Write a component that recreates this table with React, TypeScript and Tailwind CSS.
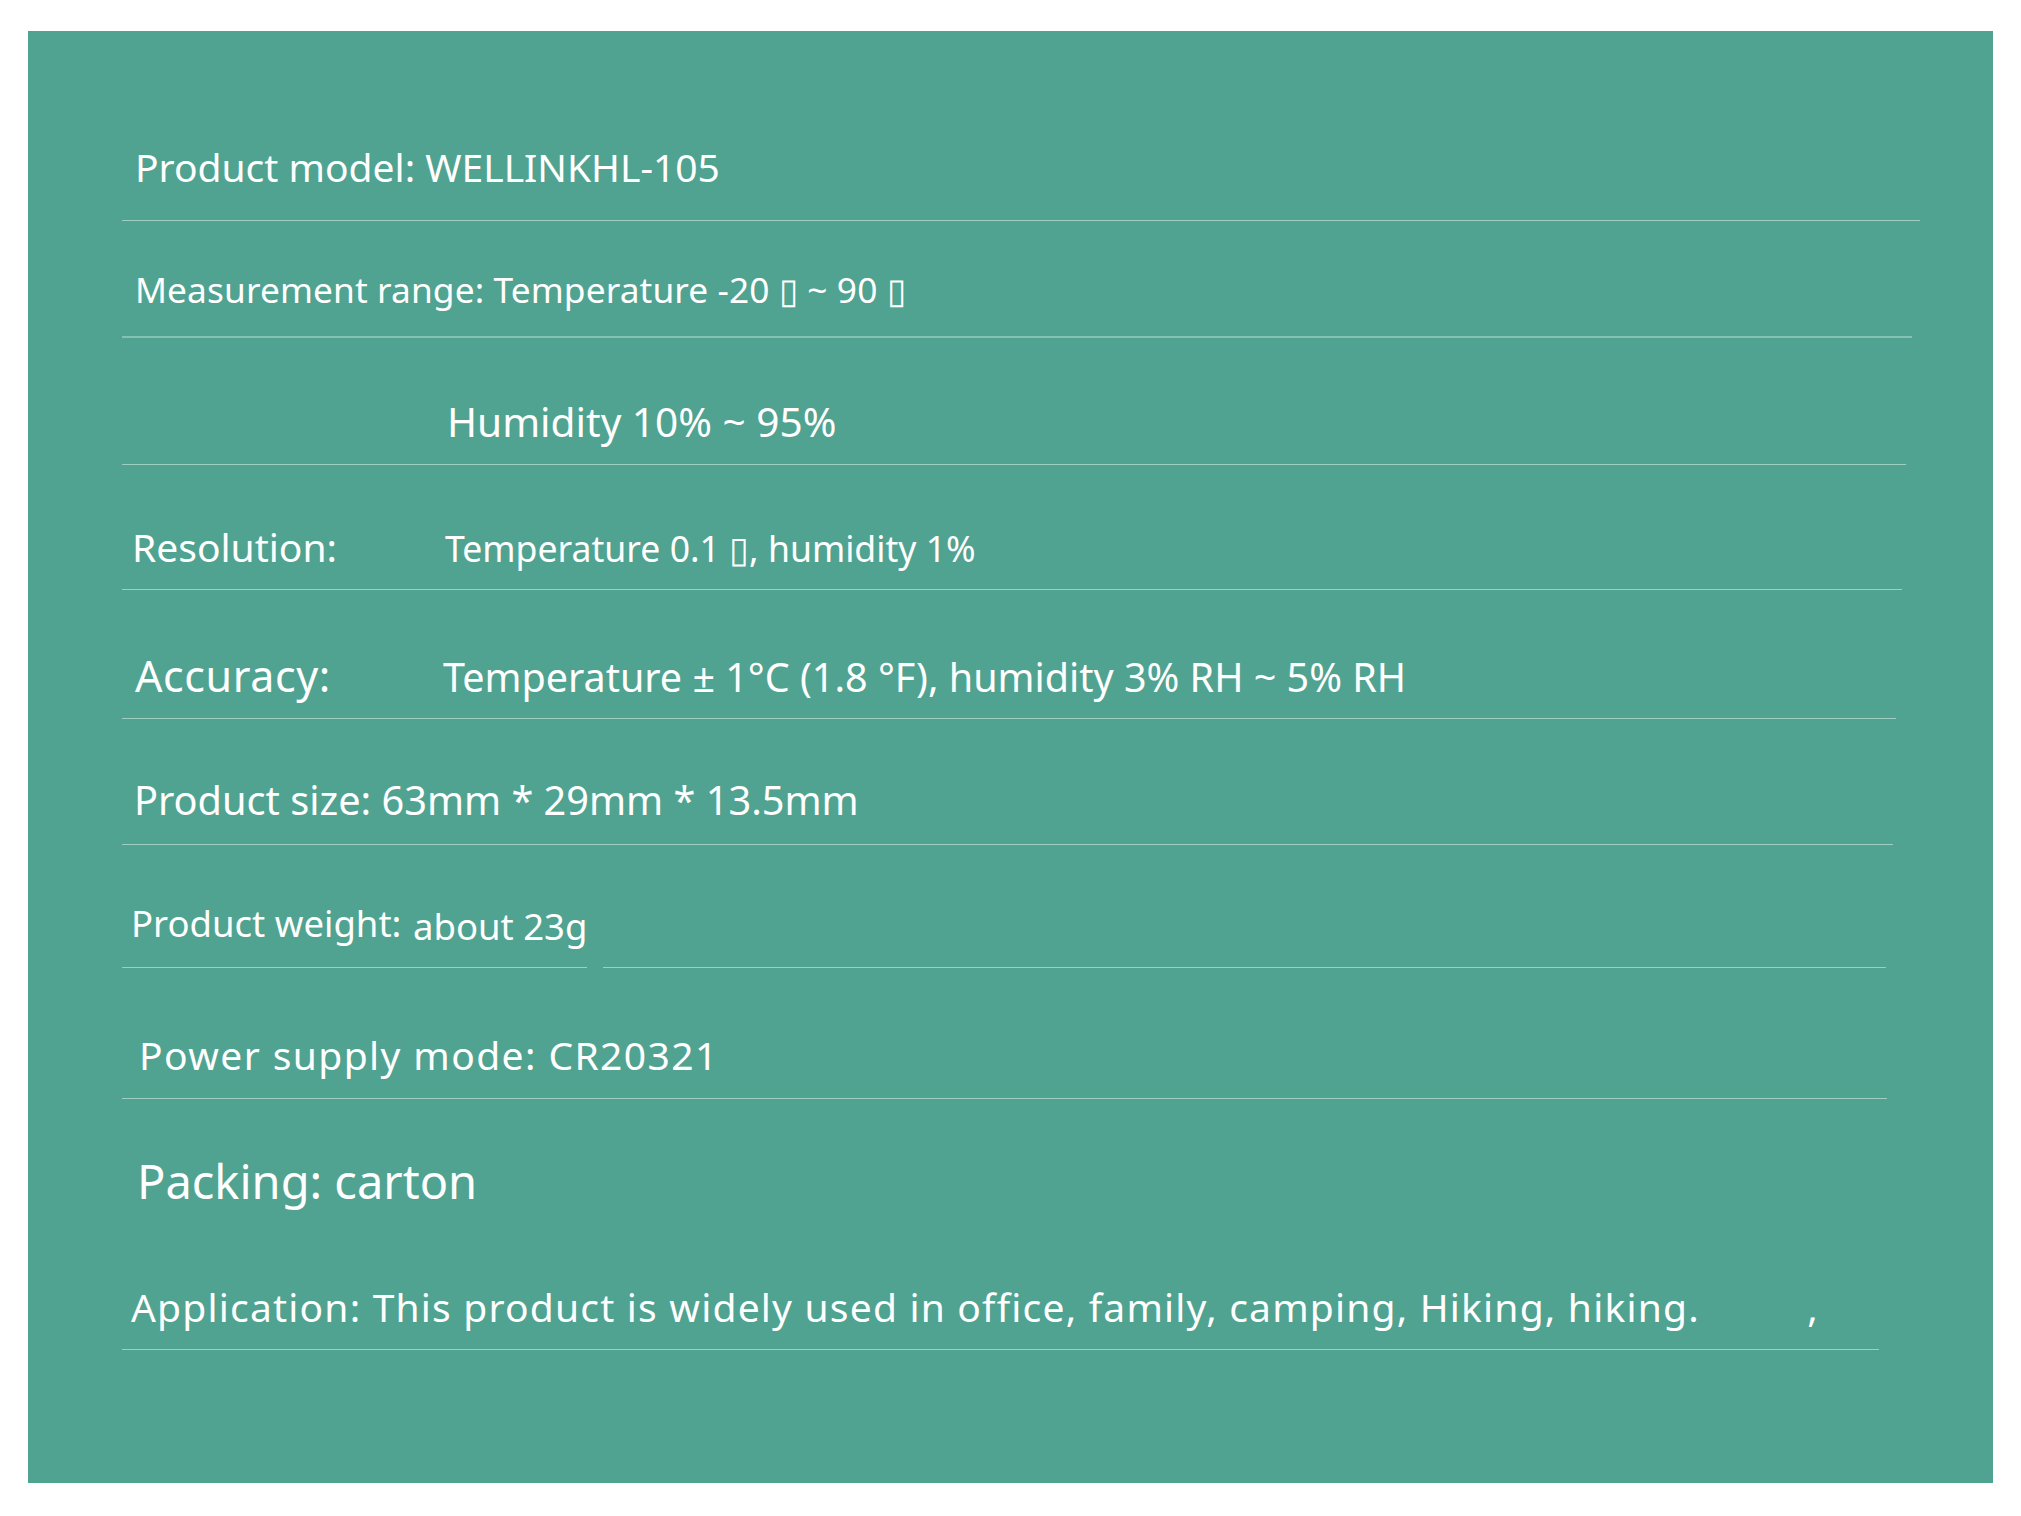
import React from "react";

const font = { fontFamily: '"Noto Sans", "Open Sans", sans-serif' };

export default function App() {
    return (
        <div className="w-[2021px] h-[1516px] bg-white pt-[31px] pl-[28px]" style={font}>
            <div className="w-[1965px] h-[1452px] bg-[#50a391] text-white pl-[94px]">
                {/* Product model */}
                <div className="w-[1798px] h-[190px] border-b border-[#9fcfc3] pt-[116px] pl-[13px]">
                    <p className="text-[39px] leading-none whitespace-nowrap">Product model: WELLINKHL-105</p>
                </div>

                {/* Measurement range */}
                <div className="w-[1790px] h-[117px] border-b-2 border-[#86c1b3] pt-[51px] pl-[13px]">
                    <p className="text-[35.3px] tracking-[0.1px] leading-none whitespace-nowrap">
                        Measurement range: Temperature -20 ▯ ~ 90 ▯
                    </p>
                </div>

                <div className="w-[1784px] h-[127px] border-b border-[#9fcfc3] pt-[64px] pl-[325px]">
                    <p className="text-[40.6px] leading-none whitespace-nowrap">Humidity 10% ~ 95%</p>
                </div>

                {/* Resolution */}
                <div className="w-[1780px] h-[125px] border-b border-[#9fcfc3] pt-[62px] pl-[10px] flex items-baseline">
                    <span className="w-[313px] shrink-0 text-[39px] leading-none whitespace-nowrap">Resolution:</span>
                    <span className="text-[35.6px] leading-none whitespace-nowrap">Temperature 0.1 ▯, humidity 1%</span>
                </div>

                {/* Accuracy */}
                <div className="w-[1774px] h-[129px] border-b border-[#9fcfc3] pt-[64px] pl-[13px] flex items-baseline">
                    <span className="w-[308px] shrink-0 text-[43px] tracking-[0.6px] leading-none whitespace-nowrap">
                        Accuracy:
                    </span>
                    <span className="text-[39.5px] leading-none whitespace-nowrap">
                        Temperature ± 1°C (1.8 °F), humidity 3% RH ~ 5% RH
                    </span>
                </div>

                {/* Product size */}
                <div className="w-[1771px] h-[126px] border-b border-[#9fcfc3] pt-[62px] pl-[12px]">
                    <p className="text-[39.7px] leading-none whitespace-nowrap">Product size: 63mm * 29mm * 13.5mm</p>
                </div>

                {/* Product weight — the rule has a small gap under the value */}
                <div className="w-[1764px] h-[123px] flex flex-col">
                    <div className="flex-1 flex items-start pl-[9px]">
                        <span className="w-[282px] shrink-0 pt-[60px] text-[36.5px] leading-none whitespace-nowrap">
                            Product weight:
                        </span>
                        <span className="pt-[63px] text-[36.5px] leading-none whitespace-nowrap">about 23g</span>
                    </div>
                    <div className="flex h-px">
                        <div className="w-[465px] bg-[#9fcfc3]" />
                        <div className="w-[16px]" />
                        <div className="flex-1 bg-[#9fcfc3]" />
                    </div>
                </div>

                {/* Power supply */}
                <div className="w-[1765px] h-[131px] border-b border-[#9fcfc3] pt-[67px] pl-[17px]">
                    <p className="text-[39px] tracking-[1.4px] leading-none whitespace-nowrap">Power supply mode: CR20321</p>
                </div>

                {/* Packing */}
                <div className="h-[140px] pt-[59px] pl-[15px]">
                    <p className="text-[47px] leading-none whitespace-nowrap">Packing: carton</p>
                </div>

                {/* Application */}
                <div className="w-[1757px] h-[111px] border-b border-[#9fcfc3] pt-[48px] pl-[9px]">
                    <div className="w-[1688px] flex items-baseline justify-between text-[39px] tracking-[1.2px] leading-none whitespace-nowrap">
                        <span>Application: This product is widely used in office, family, camping, Hiking, hiking.</span>
                        <span>,</span>
                    </div>
                </div>
            </div>
        </div>
    );
}
